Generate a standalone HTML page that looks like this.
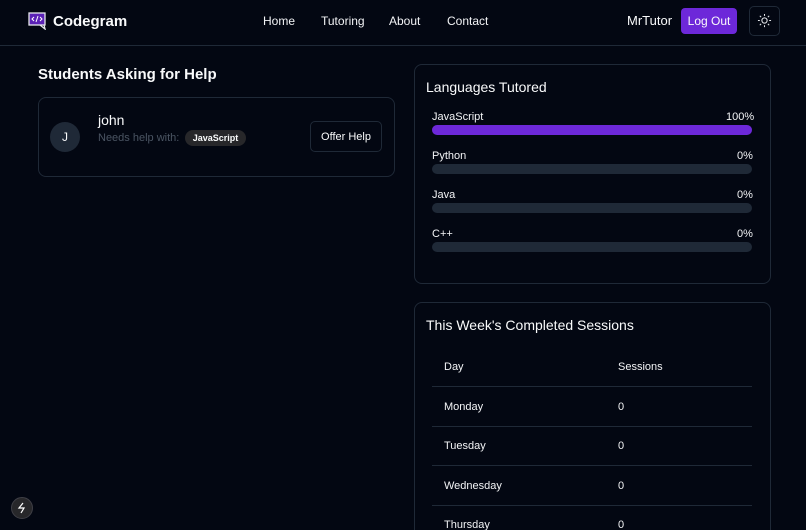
<!DOCTYPE html>
<html style="width:806px;height:530px;overflow:hidden"><head><style>
*{box-sizing:border-box;margin:0;padding:0}
body{width:806px;height:530px;overflow:hidden;background:#030712;color:#f9fafb;font-family:"Liberation Sans",sans-serif;position:relative}
.a{position:absolute}
.card{position:absolute;border:1px solid #1f2937;border-radius:8px}
.nav{font-size:12px;color:#f3f4f6}
.bar{position:absolute;left:432px;width:320px;height:10px;border-radius:5px;background:#1f2937}
.lbl{position:absolute;font-size:11px;color:#f3f4f6}
.row{position:absolute;left:432px;width:320px;border-top:1px solid #1f2937}
.td{position:absolute;font-size:11px;color:#f3f4f6}
</style></head><body>
<div class="a" style="left:0;top:45px;width:806px;height:1px;background:#1f2937"></div>
<svg class="a" style="left:28px;top:12px" width="19" height="18" viewBox="0 0 19 18"><rect x="1" y="1" width="16" height="12" fill="#5b21b6" stroke="#e5e7eb" stroke-width="1.3"/><path d="M12 13 L17 17 L16 13" fill="none" stroke="#e5e7eb" stroke-width="1.3"/><path d="M6 5 L4 7 L6 9 M12 5 L14 7 L12 9 M10 4 L8 10" fill="none" stroke="#fff" stroke-width="1"/></svg>
<div class="a" style="left:53px;top:13px;font-size:15px;font-weight:bold">Codegram</div>
<div class="a nav" style="left:263px;top:14px">Home</div>
<div class="a nav" style="left:321px;top:14px">Tutoring</div>
<div class="a nav" style="left:389px;top:14px">About</div>
<div class="a nav" style="left:447px;top:14px">Contact</div>
<div class="a" style="left:627px;top:13px;font-size:13px">MrTutor</div>
<div class="a" style="left:681px;top:8px;width:56px;height:26px;background:#6d28d9;border-radius:4px;font-size:12px;text-align:center;line-height:26px">Log Out</div>
<div class="a" style="left:749px;top:6px;width:31px;height:30px;border:1px solid #1f2937;border-radius:5px"></div>
<svg class="a" style="left:757px;top:13px" width="15" height="15" viewBox="0 0 16 16" fill="none" stroke="#e5e7eb" stroke-width="1.1"><circle cx="8" cy="8" r="2.8"/><path d="M8 1v2M8 13v2M1 8h2M13 8h2M3 3l1.4 1.4M11.6 11.6L13 13M3 13l1.4-1.4M11.6 4.4L13 3"/></svg>

<div class="a" style="left:38px;top:66px;font-size:15px;font-weight:bold">Students Asking for Help</div>
<div class="card" style="left:38px;top:97px;width:357px;height:80px"></div>
<div class="a" style="left:50px;top:122px;width:30px;height:30px;border-radius:50%;background:#1f2937;font-size:12px;text-align:center;line-height:30px">J</div>
<div class="a" style="left:98px;top:112px;font-size:14px">john</div>
<div class="a" style="left:98px;top:132px;font-size:11px;color:#4b5563">Needs help with:</div>
<div class="a" style="left:185px;top:130px;width:61px;height:16px;border-radius:8px;background:#27272a;font-size:9px;font-weight:bold;text-align:center;line-height:16px">JavaScript</div>
<div class="a" style="left:310px;top:121px;width:72px;height:31px;border:1px solid #1f2937;border-radius:5px;font-size:11px;text-align:center;line-height:30px">Offer Help</div>

<div class="card" style="left:414px;top:64px;width:357px;height:220px"></div>
<div class="a" style="left:426px;top:79px;font-size:14px">Languages Tutored</div>
<div class="lbl" style="left:432px;top:111px">JavaScript</div><div class="lbl" style="left:726px;top:111px">100%</div>
<div class="bar" style="top:125px;background:#6d28d9"></div>
<div class="lbl" style="left:432px;top:150px">Python</div><div class="lbl" style="left:737px;top:150px">0%</div>
<div class="bar" style="top:164px"></div>
<div class="lbl" style="left:432px;top:189px">Java</div><div class="lbl" style="left:737px;top:189px">0%</div>
<div class="bar" style="top:203px"></div>
<div class="lbl" style="left:432px;top:228px">C++</div><div class="lbl" style="left:737px;top:228px">0%</div>
<div class="bar" style="top:242px"></div>

<div class="card" style="left:414px;top:302px;width:357px;height:240px"></div>
<div class="a" style="left:426px;top:317px;font-size:14px">This Week's Completed Sessions</div>
<div class="td" style="left:444px;top:361px">Day</div><div class="td" style="left:618px;top:361px">Sessions</div>
<div class="row" style="top:386px"></div>
<div class="td" style="left:444px;top:401px">Monday</div><div class="td" style="left:618px;top:401px">0</div>
<div class="row" style="top:426px"></div>
<div class="td" style="left:444px;top:440px">Tuesday</div><div class="td" style="left:618px;top:440px">0</div>
<div class="row" style="top:465px"></div>
<div class="td" style="left:444px;top:480px">Wednesday</div><div class="td" style="left:618px;top:480px">0</div>
<div class="row" style="top:505px"></div>
<div class="td" style="left:444px;top:519px">Thursday</div><div class="td" style="left:618px;top:519px">0</div>

<div class="a" style="left:11px;top:497px;width:22px;height:22px;border-radius:50%;background:#27272a;border:1px solid #3f3f46"></div>
<svg class="a" style="left:16px;top:502px" width="12" height="12" viewBox="0 0 12 12" fill="none" stroke="#fff" stroke-width="1.2"><path d="M7 1 L3 6 H8 L5 11"/></svg>
</body></html>
